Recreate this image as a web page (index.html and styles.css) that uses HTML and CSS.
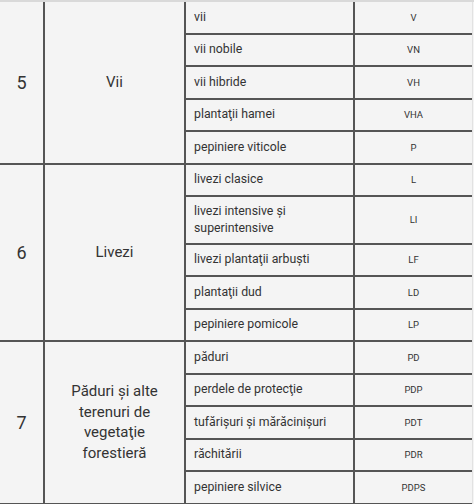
FILE: index.html
```html
<!DOCTYPE html>
<html lang="ro">
<head>
<meta charset="utf-8">
<link rel="stylesheet" href="styles.css">
</head>
<body>
<div class="top-edge"></div>
<div class="table">
  <div class="group">
    <div class="num">5</div>
    <div class="cat">Vii</div>
    <div class="subs">
      <div class="sub"><div class="label">vii</div><div class="code">V</div></div>
      <div class="sub"><div class="label">vii nobile</div><div class="code">VN</div></div>
      <div class="sub"><div class="label">vii hibride</div><div class="code">VH</div></div>
      <div class="sub"><div class="label">plantaţii hamei</div><div class="code">VHA</div></div>
      <div class="sub"><div class="label">pepiniere viticole</div><div class="code">P</div></div>
    </div>
  </div>
  <div class="group">
    <div class="num">6</div>
    <div class="cat">Livezi</div>
    <div class="subs">
      <div class="sub"><div class="label">livezi clasice</div><div class="code">L</div></div>
      <div class="sub tall"><div class="label">livezi intensive şi<br>superintensive</div><div class="code">LI</div></div>
      <div class="sub"><div class="label">livezi plantaţii arbuşti</div><div class="code">LF</div></div>
      <div class="sub"><div class="label">plantaţii dud</div><div class="code">LD</div></div>
      <div class="sub"><div class="label">pepiniere pomicole</div><div class="code">LP</div></div>
    </div>
  </div>
  <div class="group">
    <div class="num">7</div>
    <div class="cat">Păduri şi alte<br>terenuri de<br>vegetaţie<br>forestieră</div>
    <div class="subs">
      <div class="sub"><div class="label">păduri</div><div class="code">PD</div></div>
      <div class="sub"><div class="label">perdele de protecţie</div><div class="code">PDP</div></div>
      <div class="sub"><div class="label">tufărişuri şi mărăcinişuri</div><div class="code">PDT</div></div>
      <div class="sub"><div class="label">răchitării</div><div class="code">PDR</div></div>
      <div class="sub"><div class="label">pepiniere silvice</div><div class="code">PDPS</div></div>
    </div>
  </div>
</div>
</body>
</html>
```

FILE: styles.css
```css
* { box-sizing: border-box; }
html, body {
  margin: 0;
  padding: 0;
  background: #f4f4f4;
  overflow: hidden;
}
body {
  width: 474px;
  height: 504px;
  font-family: Roboto, "Liberation Sans", sans-serif;
  color: #333;
}
.top-edge {
  height: 2px;
  background: #d9d9d9;
}
.table {
  border-right: 1px solid #e2e2e2;
  width: 473px;
}
.group {
  display: flex;
  border-bottom: 2px solid #555;
}
.num {
  width: 45px;
  flex: none;
  border-right: 2px solid #555;
  display: flex;
  align-items: center;
  justify-content: center;
  font-size: 18px;
}
.cat {
  width: 141px;
  flex: none;
  border-right: 2px solid #555;
  display: flex;
  align-items: center;
  justify-content: center;
  text-align: center;
  font-size: 15px;
  line-height: 20.5px;
}
.subs {
  flex: 1;
  display: flex;
  flex-direction: column;
}
.sub {
  display: flex;
  height: 32.5px;
  border-top: 2px solid #555;
}
.sub:first-child {
  height: 30.5px;
  border-top: none;
}
.sub.tall {
  height: 47.5px;
}
.label {
  width: 169px;
  flex: none;
  border-right: 2px solid #555;
  display: flex;
  align-items: center;
  padding-left: 8px;
  font-size: 12.3px;
  line-height: 17px;
}
.code {
  flex: 1;
  display: flex;
  align-items: center;
  justify-content: center;
  font-size: 9.5px;
  font-weight: 400;
}
```
